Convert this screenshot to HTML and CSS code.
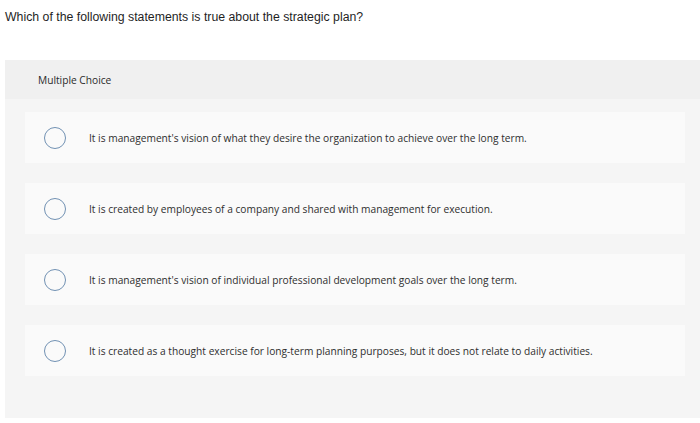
FILE: index.html
```html
<!DOCTYPE html>
<html>
<head>
<meta charset="utf-8">
<link rel="stylesheet" href="styles.css">
</head>
<body>
<div class="question">Which of the following statements is true about the strategic plan?</div>
<div class="panel">
  <div class="panel-head">Multiple Choice</div>
  <div class="panel-body">
    <div class="choice"><span class="radio"></span><span class="label">It is management's vision of what they desire the organization to achieve over the long term.</span></div>
    <div class="choice"><span class="radio"></span><span class="label">It is created by employees of a company and shared with management for execution.</span></div>
    <div class="choice"><span class="radio"></span><span class="label">It is management's vision of individual professional development goals over the long term.</span></div>
    <div class="choice"><span class="radio"></span><span class="label">It is created as a thought exercise for long-term planning purposes, but it does not relate to daily activities.</span></div>
  </div>
</div>
</body>
</html>
```
FILE: styles.css
```css
html, body {
  margin: 0;
  padding: 0;
  background: #ffffff;
}
body {
  font-family: "Open Sans", "Liberation Sans", sans-serif;
  color: #2b2b2b;
}
.question {
  font-family: "Liberation Sans", Arial, sans-serif;
  font-size: 12.3px;
  line-height: 18px;
  padding: 8px 0 0 5px;
  height: 60px;
  box-sizing: border-box;
  color: #1f1f1f;
}
.panel {
  margin-left: 5px;
  background: #f5f5f5;
}
.panel-head {
  background: #f0f0f0;
  height: 39px;
  display: flex;
  align-items: center;
  padding-left: 33px;
  font-size: 10.2px;
  color: #2b2b2b;
}
.panel-body {
  padding: 13px 15px 42px 20px;
  display: flex;
  flex-direction: column;
  gap: 20px;
}
.choice {
  background: #fafafa;
  height: 51px;
  display: flex;
  align-items: center;
  padding-left: 19px;
}
.radio {
  width: 20px;
  height: 20px;
  border: 1.5px solid #7191b3;
  border-radius: 50%;
  flex: none;
}
.label {
  margin-left: 23px;
  font-size: 10.2px;
  color: #2e2e2e;
}
```
